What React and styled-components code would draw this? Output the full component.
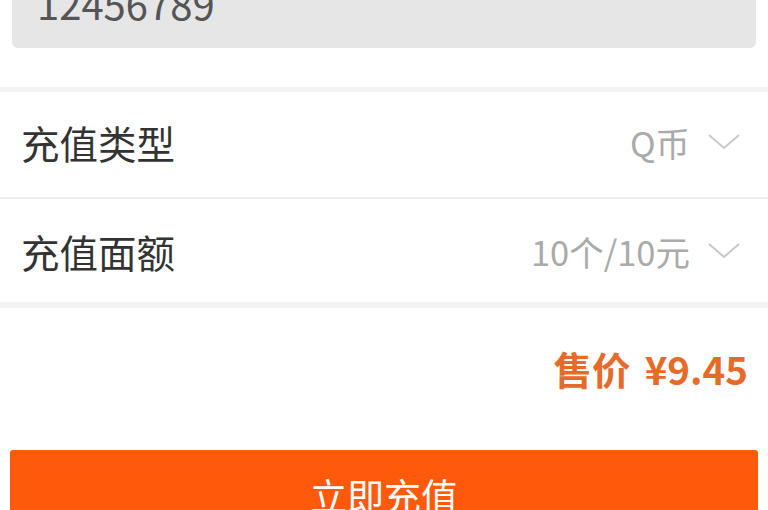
import React from 'react'
import styled, { createGlobalStyle } from 'styled-components';

const GlobalStyle = createGlobalStyle`
  body {
    margin: 0;
    background: #fff;
    font-family: "Noto Sans CJK SC", "Noto Sans", sans-serif;
    overflow: hidden;
  }
`;

const Page = styled.div`
  margin-top: -32px;
  display: flex;
  flex-direction: column;
`;

const AccountBox = styled.div`
  margin: 0 12px;
  height: 80px;
  box-sizing: border-box;
  padding: 0 0 10px 25px;
  background: #e6e6e6;
  border-radius: 6px;
  display: flex;
  align-items: center;
  font-size: 40px;
  color: #555;
`;

const Section = styled.div`
  margin-top: 39px;
  border-top: 5px solid #f2f2f2;
  border-bottom: 6px solid #f2f2f2;
`;

const Row = styled.div`
  height: 105px;
  box-sizing: border-box;
  padding: 0 28px ${(p) => p.$lift || 0}px 21px;
  display: flex;
  align-items: center;
  justify-content: space-between;
  & + & {
    border-top: 2px solid #ededed;
  }
`;

const Label = styled.span`
  font-size: 38.5px;
  color: #333;
`;

const Picker = styled.div`
  display: flex;
  align-items: center;
  gap: 18px;
  font-size: 34.5px;
  color: #aaa;
`;

const Price = styled.div`
  height: 120px;
  display: flex;
  align-items: center;
  justify-content: flex-end;
  padding-right: 20px;
  font-size: 38.5px;
  font-weight: bold;
  color: #e66b2a;
  gap: 14px;
`;

const SubmitButton = styled.button`
  margin: 22px 10px 0;
  height: 90px;
  border: none;
  border-radius: 3px;
  background: #ff5a0c;
  color: #fff;
  font-family: inherit;
  font-size: 37px;
`;

const Chevron = () => (
  <svg width="32" height="18" viewBox="0 0 32 18">
    <polyline points="1,2 16,15 31,2" fill="none" stroke="#c8c8c8" strokeWidth="2" />
  </svg>
);

const App = () => {
  return (
    <>
      <GlobalStyle />
      <Page>
        <AccountBox>12456789</AccountBox>
        <Section>
          <Row $lift={5}>
            <Label>充值类型</Label>
            <Picker>Q币 <Chevron /></Picker>
          </Row>
          <Row>
            <Label>充值面额</Label>
            <Picker>10个/10元 <Chevron /></Picker>
          </Row>
        </Section>
        <Price>
          <span>售价</span>
          <span>¥9.45</span>
        </Price>
        <SubmitButton>立即充值</SubmitButton>
      </Page>
    </>
  )
}

export default App;
